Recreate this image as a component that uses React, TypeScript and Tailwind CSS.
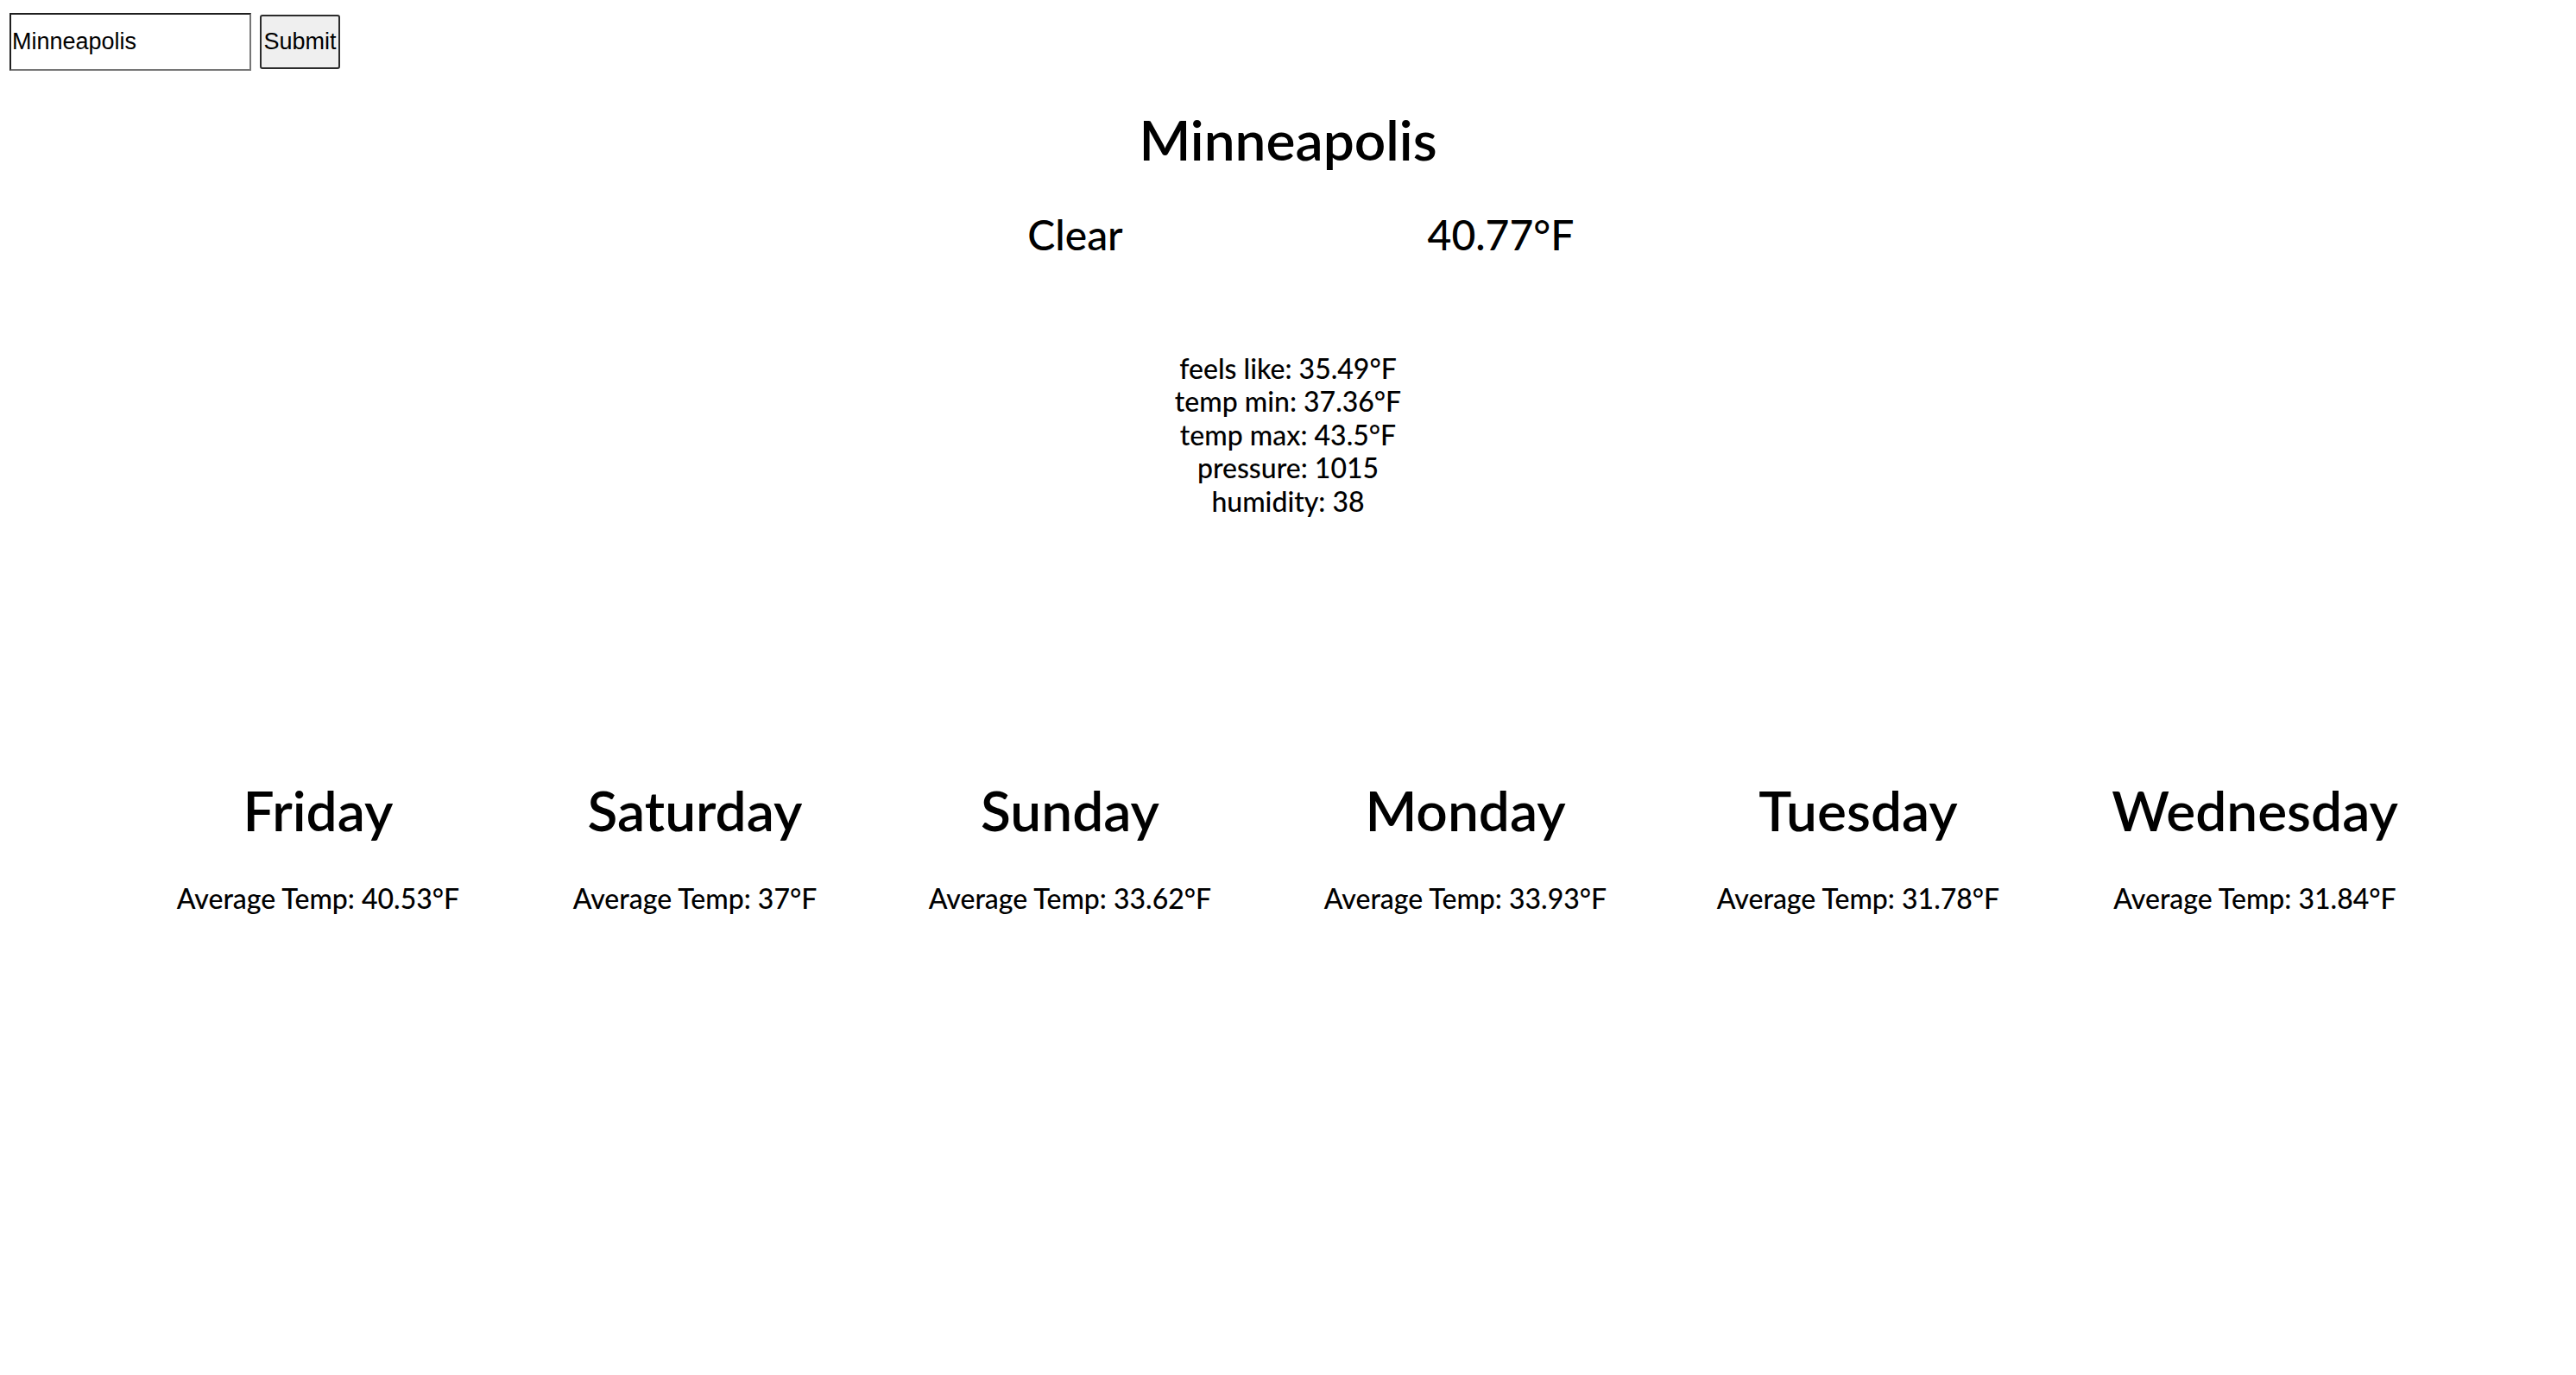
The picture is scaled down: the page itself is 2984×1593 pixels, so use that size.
import React from "react";

const days = [
  { name: "Friday", avg: "40.53", w: "w-[333px]" },
  { name: "Saturday", avg: "37", w: "w-[284px]" },
  { name: "Sunday", avg: "33.62", w: "w-[329px]" },
  { name: "Monday", avg: "33.93", w: "w-[331px]" },
  { name: "Tuesday", avg: "31.78", w: "w-[323px]" },
  { name: "Wednesday", avg: "31.84", w: "w-[340px]" },
];

export default function App() {
  return (
    <div className="min-h-screen bg-white text-black">
      <form
        className="flex items-center gap-[10px] pl-[11px] pt-[15px]"
        onSubmit={(e) => e.preventDefault()}
      >
        <input
          defaultValue="Minneapolis"
          className="box-border h-[67px] w-[280px] border-2 border-t-[#1f1f1f] border-l-[#1f1f1f] border-r-[#767676] border-b-[#767676] bg-white px-[1px] text-[27px] text-black outline-none [font-family:'Liberation_Sans',Arial,sans-serif]"
        />
        <button
          type="submit"
          className="box-border h-[63px] w-[93px] rounded-[3px] border-2 border-[#2b2b2b] bg-[#efefef] text-[27px] text-black [font-family:'Liberation_Sans',Arial,sans-serif]"
        >
          Submit
        </button>
      </form>

      <main className="[font-family:Lato,'Noto_Sans',sans-serif]">
        <h1 className="mt-[48px] text-center text-[64px] font-semibold leading-[64px]">
          Minneapolis
        </h1>

        <div className="mt-[54px] flex justify-center">
          <div className="w-[493px] text-center text-[48px] font-medium leading-[48px]">Clear</div>
          <div className="w-[493px] text-center text-[48px] font-medium leading-[48px]">40.77°F</div>
        </div>

        <div className="mt-[112px] flex flex-col items-center text-[32px] font-medium leading-[38.4px]">
          <p>feels like: 35.49°F</p>
          <p>temp min: 37.36°F</p>
          <p>temp max: 43.5°F</p>
          <p>pressure: 1015</p>
          <p>humidity: 38</p>
        </div>

        <div className="mt-[307px] flex justify-center gap-[128px]">
          {days.map((d) => (
            <div key={d.name} className={`${d.w} flex flex-col items-center whitespace-nowrap`}>
              <h2 className="text-[64px] font-semibold leading-[64px]">{d.name}</h2>
              <p className="mt-[54px] text-[32px] font-medium leading-[32px]">Average Temp: {d.avg}°F</p>
            </div>
          ))}
        </div>
      </main>
    </div>
  );
}
